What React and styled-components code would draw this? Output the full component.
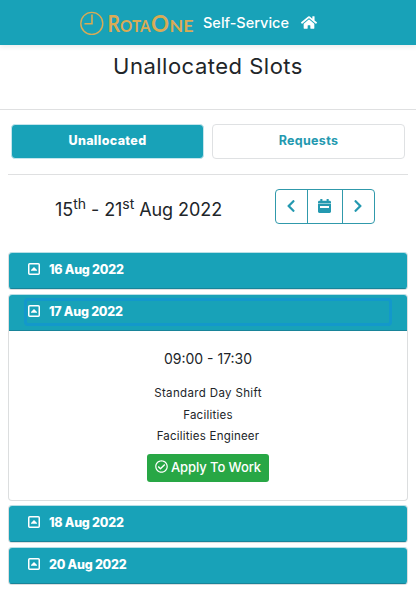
import React from 'react';
import styled, { createGlobalStyle } from 'styled-components';
import { FaHome, FaChevronLeft, FaChevronRight, FaRegCheckCircle } from 'react-icons/fa';

const teal = '#18a2b8';

const GlobalStyle = createGlobalStyle`
  *, *::before, *::after { box-sizing: border-box; }
  body {
    margin: 0;
    background: #fff;
    color: #212529;
    font-family: Inter, "Open Sans", sans-serif;
  }
  h1, h2, p { margin: 0; font-weight: 400; }
  button { font-family: inherit; margin: 0; padding: 0; }
`;

const Page = styled.div`
  width: 416px;
  height: 593px;
  overflow: hidden;
`;

const TopBar = styled.header`
  height: 45px;
  padding-left: 80px;
  display: flex;
  align-items: center;
  background: ${teal};
  color: #fff;
  box-shadow: 0 2px 5px rgba(0, 0, 0, 0.08);
`;

const Logo = styled.svg`
  width: 114px;
  height: 45px;
  flex: none;
  fill: #d9ab55;
  font-family: Lato, sans-serif;
`;

const Brand = styled.span`
  margin-left: 9px;
  width: 98px;
  font-size: 14.5px;
  font-weight: 500;
  letter-spacing: ${(p) => p.$track}px;
  line-height: 45px;
  white-space: nowrap;
`;

const HomeIcon = styled(FaHome)`
  width: 16px;
  height: 15px;
  margin-top: -1px;
`;

const TitleBar = styled.div`
  height: 65px;
  padding-top: 6px;
  border-bottom: 1px solid #dfe0e1;
  text-align: center;
`;

const Title = styled.h1`
  font-size: 22px;
  line-height: 30px;
  letter-spacing: 0.5px;
`;

const Tabs = styled.nav`
  display: grid;
  grid-template-columns: 193px 193px;
  gap: 8px;
  height: 65px;
  margin: 0 8px;
  padding: 14px 0 0 3px;
  border-bottom: 1px solid #dfe0e1;
`;

const Tab = styled.button`
  height: 35px;
  padding-bottom: 2px;
  border: 1px solid ${(p) => (p.$active ? '#c4e5ec' : '#dfe1e3')};
  border-radius: 4px;
  background: ${(p) => (p.$active ? teal : '#fff')};
  color: ${(p) => (p.$active ? '#fff' : '#2499b0')};
  font-size: 12.5px;
  font-weight: ${(p) => (p.$active ? 800 : 700)};
  letter-spacing: ${(p) => p.$track}px;
`;

const WeekRow = styled.div`
  display: flex;
  height: 77px;
  padding: 14px 0 0 55px;
`;

const WeekLabel = styled.h2`
  width: 220px;
  padding-top: 1px;
  font-size: 18px;
  line-height: 40px;
  letter-spacing: -0.06px;
  white-space: nowrap;

  sup {
    position: relative;
    top: -7px;
    font-size: 14px;
    line-height: 0;
    vertical-align: baseline;
  }
`;

const WeekNav = styled.div`
  display: grid;
  grid-template-columns: 32px 35px 31px;
  width: 100px;
  height: 35px;
  border: 1px solid #3099ab;
  border-radius: 4px;
`;

const NavButton = styled.button`
  display: flex;
  align-items: center;
  justify-content: center;
  padding: 0 1px 1px 0;
  border: 0;
  border-right: ${(p) => (p.$last ? '0' : '1px solid #3099ab')};
  background: none;
  color: #2499b0;

  svg { display: block; }
`;

const SlotList = styled.main`
  display: flex;
  flex-direction: column;
  gap: 4px;
  padding: 0 8px;
`;

const Card = styled.section`
  border: 1px solid #dcdedf;
  border-top-color: #b9dfe6;
  border-radius: 4px;
  overflow: hidden;
`;

const CardHeader = styled.div`
  height: 36px;
  padding: 3px 15px 4px;
  background: ${teal};
  border-bottom: 1px solid #188499;
`;

const CardToggle = styled.button`
  display: flex;
  align-items: center;
  width: 100%;
  height: 28px;
  padding: 0 0 2px 4px;
  border: 0;
  border-radius: 4px;
  background: none;
  color: #fff;
  font-size: 12.5px;
  font-weight: 800;
  letter-spacing: ${(p) => p.$track}px;
  box-shadow: ${(p) => (p.$focused ? 'inset 0 0 0 3px #1398cb' : 'none')};

  svg { width: 12px; height: 12px; margin-right: 9px; }
`;

const CardBody = styled.div`
  display: flex;
  flex-direction: column;
  align-items: center;
  height: 169px;
  padding-top: 18px;
`;

const Hours = styled.p`
  height: 34px;
  font-size: 14px;
  line-height: 20px;
`;

const Detail = styled.p`
  font-size: 11.5px;
  line-height: 21.5px;
  letter-spacing: ${(p) => p.$track}px;
`;

const ApplyButton = styled.button`
  display: flex;
  align-items: center;
  justify-content: center;
  gap: 3px;
  width: 122px;
  height: 28px;
  margin-top: 6px;
  padding-bottom: 2px;
  border: 0;
  border-radius: 3px;
  background: #28a745;
  color: #fff;
  font-size: 13px;
  font-weight: 500;
  letter-spacing: -0.08px;
  white-space: nowrap;
`;

function LogoMark() {
  return (
    <Logo viewBox="0 0 114 45">
      <circle cx="11.8" cy="23.4" r="11" fill="none" stroke="#d9ab55" strokeWidth="1.4" />
      <path d="M12 14.5v9.2H4.5" fill="none" stroke="#d9ab55" strokeWidth="1.6" />
      <text y="32" fontWeight="700">
        <tspan x="27.5" fontSize="22" textLength="12.5" lengthAdjust="spacingAndGlyphs">R</tspan>
        <tspan x="40" fontSize="17.5" textLength="30.5" lengthAdjust="spacingAndGlyphs">OTA</tspan>
        <tspan x="71" fontSize="22" textLength="18" lengthAdjust="spacingAndGlyphs">O</tspan>
        <tspan x="89.5" fontSize="17.5" textLength="24" lengthAdjust="spacingAndGlyphs">NE</tspan>
      </text>
    </Logo>
  );
}

function CalendarIcon() {
  return (
    <svg width="13" height="15" viewBox="0 0 13 15" fill="currentColor">
      <path d="M2.3 0h2.1v1.8h4.2V0h2.1v1.8h.9c.8 0 1.4.6 1.4 1.3v1.3H0V3.1c0-.7.6-1.3 1.4-1.3h.9z" />
      <path fillRule="evenodd" d="M0 5h13v7.6c0 .8-.6 1.4-1.4 1.4H1.4C.6 14 0 13.4 0 12.6zM2 7v2h9V7z" />
    </svg>
  );
}

function CaretSquare() {
  return (
    <svg viewBox="0 0 12 12">
      <rect x="0.75" y="0.75" width="10.5" height="10.5" rx="1" fill="none" stroke="#fff" strokeWidth="1.5" />
      <path d="M6 4 9 7v.8H3V7z" fill="#fff" />
    </svg>
  );
}

function SlotCard({ date, track = -0.25, focused, children }) {
  return (
    <Card>
      <CardHeader>
        <CardToggle $track={track} $focused={focused}>
          <CaretSquare />
          {date}
        </CardToggle>
      </CardHeader>
      {children}
    </Card>
  );
}

export default function App() {
  return (
    <>
      <GlobalStyle />
      <Page>
        <TopBar>
          <LogoMark />
          <Brand $track={0}>Self-Service</Brand>
          <HomeIcon />
        </TopBar>
        <TitleBar>
          <Title>Unallocated Slots</Title>
        </TitleBar>
        <Tabs>
          <Tab $active $track={0.35}>Unallocated</Tab>
          <Tab $track={0.3}>Requests</Tab>
        </Tabs>
        <WeekRow>
          <WeekLabel>15<sup>th</sup> - 21<sup>st</sup> Aug 2022</WeekLabel>
          <WeekNav>
            <NavButton><FaChevronLeft size={14} /></NavButton>
            <NavButton><CalendarIcon /></NavButton>
            <NavButton $last><FaChevronRight size={14} /></NavButton>
          </WeekNav>
        </WeekRow>
        <SlotList>
          <SlotCard date="16 Aug 2022" />
          <SlotCard date="17 Aug 2022" focused>
            <CardBody>
              <Hours>09:00 - 17:30</Hours>
              <Detail $track={0.35}>Standard Day Shift</Detail>
              <Detail $track={0.25}>Facilities</Detail>
              <Detail $track={0.22}>Facilities Engineer</Detail>
              <ApplyButton>
                <FaRegCheckCircle size={13} />
                Apply To Work
              </ApplyButton>
            </CardBody>
          </SlotCard>
          <SlotCard date="18 Aug 2022" />
          <SlotCard date="20 Aug 2022" />
        </SlotList>
      </Page>
    </>
  );
}
